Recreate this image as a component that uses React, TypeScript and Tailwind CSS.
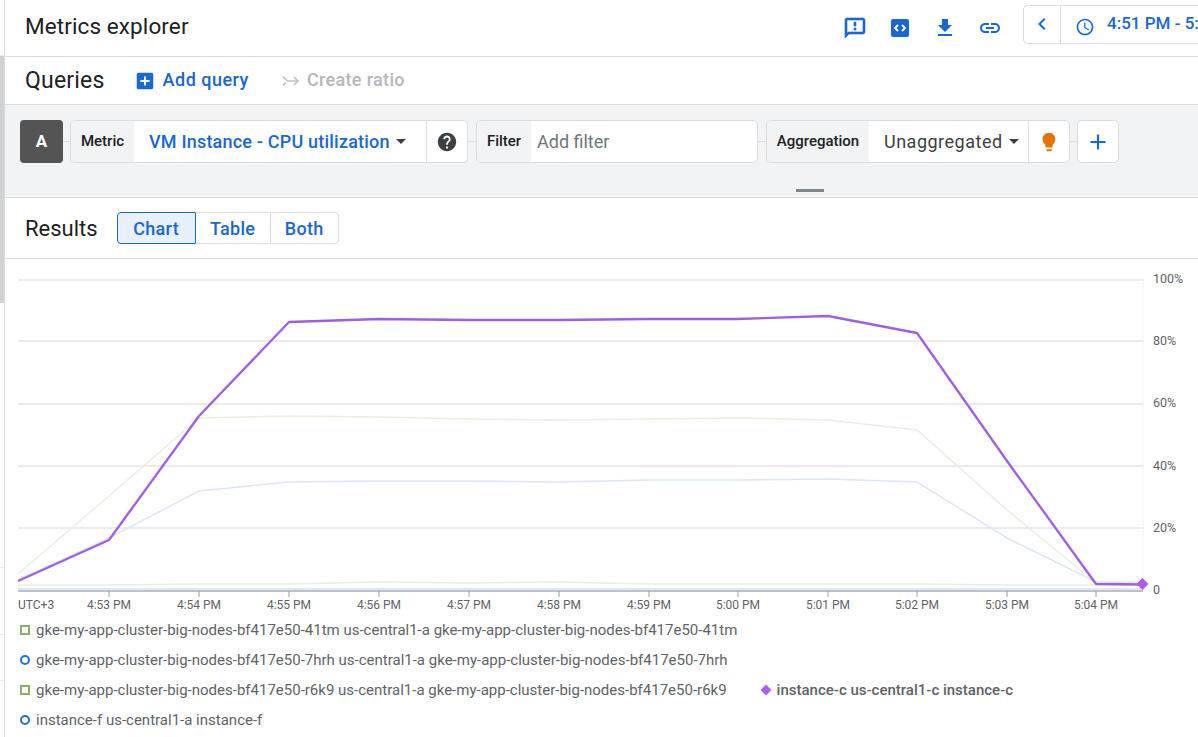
import React from "react";

const BLUE = "#1967d2";

function MI({ d, size = 24, color = BLUE }: { d: string; size?: number; color?: string }) {
  return (
    <svg width={size} height={size} viewBox="0 0 24 24" fill={color} className="shrink-0">
      <path d={d} />
    </svg>
  );
}

const icons = {
  download: "M19 9h-4V3H9v6H5l7 7 7-7zM5 18v2h14v-2H5z",
  link: "M3.9 12c0-1.71 1.39-3.1 3.1-3.1h4V7H7c-2.76 0-5 2.24-5 5s2.24 5 5 5h4v-1.9H7c-1.71 0-3.1-1.39-3.1-3.1zM8 13h8v-2H8v2zm9-6h-4v1.9h4c1.71 0 3.1 1.39 3.1 3.1s-1.39 3.1-3.1 3.1h-4V17h4c2.76 0 5-2.24 5-5s-2.24-5-5-5z",
  chevron: "M15.41 7.41L14 6l-6 6 6 6 1.41-1.41L10.83 12z",
  clock: "M11.99 2C6.47 2 2 6.48 2 12s4.47 10 9.99 10C17.52 22 22 17.52 22 12S17.52 2 11.99 2zM12 20c-4.42 0-8-3.58-8-8s3.58-8 8-8 8 3.58 8 8-3.58 8-8 8zm.5-13H11v6l5.25 3.15.75-1.23-4.5-2.67z",
  addBox: "M19 3H5c-1.11 0-2 .9-2 2v14c0 1.1.89 2 2 2h14c1.1 0 2-.9 2-2V5c0-1.1-.9-2-2-2zm-2 10h-4v4h-2v-4H7v-2h4V7h2v4h4v2z",
  help: "M12 2C6.48 2 2 6.48 2 12s4.48 10 10 10 10-4.48 10-10S17.52 2 12 2zm1 17h-2v-2h2v2zm2.07-7.75l-.9.92C13.45 12.9 13 13.5 13 15h-2v-.5c0-1.1.45-2.1 1.17-2.83l1.24-1.26c.37-.36.59-.86.59-1.41 0-1.1-.9-2-2-2s-2 .9-2 2H8c0-2.21 1.79-4 4-4s4 1.79 4 4c0 .88-.36 1.68-.93 2.25z",
  bulb: "M9 21c0 .55.45 1 1 1h4c.55 0 1-.45 1-1v-1H9v1zm3-19C8.14 2 5 5.14 5 9c0 2.38 1.19 4.47 3 5.74V17c0 .55.45 1 1 1h6c.55 0 1-.45 1-1v-2.26c1.81-1.27 3-3.36 3-5.74 0-3.86-3.14-7-7-7z",
  add: "M19 13h-6v6h-2v-6H5v-2h6V5h2v6h6v2z",
};

function FeedbackIcon() {
  return (
    <svg width={24} height={24} viewBox="0 0 24 24" className="shrink-0">
      <path d="M20 2H4c-1.1 0-2 .9-2 2v18l4-4h14c1.1 0 2-.9 2-2V4c0-1.1-.9-2-2-2zm0 14H5.17L4 17.17V4h16v12zM11 12h2v2h-2zm0-6h2v4h-2z" fill={BLUE} stroke={BLUE} strokeWidth="0.6" />
    </svg>
  );
}

function CodeIcon() {
  return (
    <svg width={24} height={24} viewBox="0 0 24 24" className="shrink-0">
      <rect x="3" y="3" width="18" height="18" rx="2" fill={BLUE} />
      <path d="M10 9l-3 3 3 3M14 9l3 3-3 3" fill="none" stroke="#fff" strokeWidth="1.8" />
    </svg>
  );
}

function RatioIcon() {
  return (
    <svg width={18} height={18} viewBox="0 0 18 18" fill="none" stroke="#bdc1c6" strokeWidth="1.6" className="shrink-0">
      <path d="M1 4.5l4.5 4.5H16M12 5l4 4-4 4M1 13.5l3-3" />
    </svg>
  );
}

function Caret() {
  return <span className="ml-[6px] h-0 w-0 border-x-[5px] border-t-[5px] border-x-transparent border-t-[#3c4043]" />;
}

const xTicks: [number, string][] = [
  [109, "4:53 PM"],
  [199, "4:54 PM"],
  [289, "4:55 PM"],
  [379, "4:56 PM"],
  [469, "4:57 PM"],
  [559, "4:58 PM"],
  [649, "4:59 PM"],
  [738, "5:00 PM"],
  [828, "5:01 PM"],
  [917, "5:02 PM"],
  [1007, "5:03 PM"],
  [1096, "5:04 PM"],
];

const yTicks: [number, string, number][] = [
  [280, "100%", 283],
  [341, "80%", 345],
  [404, "60%", 407],
  [466, "40%", 470],
  [528, "20%", 532],
];

const X = [18, 109, 199, 289, 379, 469, 559, 649, 738, 828, 917, 1007, 1096, 1143];
const toPts = (ys: number[]) => ys.map((y, i) => `${X[i]},${y}`).join(" ");

const purple = toPts([581, 540, 416, 322, 319, 320, 320, 319, 319, 316, 333, 461, 584, 584.5]);
const beige = toPts([574, 496, 418, 416, 417, 419, 420, 419, 418, 420, 430, 510, 583, 584]);
const lightBlue = toPts([580, 538, 491, 482, 481, 481, 482, 480, 480, 479, 482, 538, 582, 582]);
const lowGreen = toPts([585, 585, 584, 584, 582, 583, 582, 584, 584, 584, 584, 585, 585, 585]);
const lowBlue = toPts([589, 589, 589, 589, 589, 589, 589, 589, 589, 589, 589, 589, 589, 589]);

function Chart() {
  return (
    <svg width={1193} height={356} viewBox="5 259 1193 356" className="block shrink-0" style={{ fontFamily: "Roboto, sans-serif" }}>
      {yTicks.map(([y]) => (
        <line key={y} x1={18} x2={1144} y1={y} y2={y} stroke="#e3e4e8" strokeWidth={1.3} />
      ))}
      <line x1={1143} x2={1143} y1={280} y2={590} stroke="#f3f4f5" />
      <polyline points={beige} fill="none" stroke="#e9eee0" strokeWidth={1.5} />
      <polyline points={lightBlue} fill="none" stroke="#dce6f5" strokeWidth={1.5} />
      <polyline points={lowGreen} fill="none" stroke="#e9eee0" strokeWidth={1.5} />
      <polyline points={lowBlue} fill="none" stroke="#d5e1f4" strokeWidth={1.5} />
      <line x1={18} x2={1143} y1={591} y2={591} stroke="#80868b" strokeWidth={1} />
      <polyline points={purple} fill="none" stroke="#a05fe0" strokeWidth={2.3} strokeLinejoin="round" />
      <path d="M1142.5 578l6 6-6 6-6-6z" fill="#af5cf0" />
      {xTicks.map(([x, t]) => (
        <g key={t}>
          <line x1={x} x2={x} y1={591} y2={597} stroke="#9aa0a6" />
          <text x={x} y={609} textAnchor="middle" fontSize={12} fill="#5f6368">
            {t}
          </text>
        </g>
      ))}
      <text x={18} y={609} fontSize={12} fill="#5f6368">
        UTC+3
      </text>
      {yTicks.map(([, t, ty]) => (
        <text key={t} x={1153} y={ty} fontSize={12.5} fill="#5f6368">
          {t}
        </text>
      ))}
      <text x={1153} y={594} fontSize={12.5} fill="#5f6368">
        0
      </text>
    </svg>
  );
}

function Square() {
  return <span className="h-[10px] w-[10px] shrink-0 border-2 border-[#8cae66]" />;
}
function Circle() {
  return <span className="h-[10px] w-[10px] shrink-0 rounded-full border-2 border-[#1f6fd8]" />;
}
function Diamond() {
  return (
    <svg width={12} height={12} viewBox="0 0 12 12" className="shrink-0">
      <path d="M6 .5L11.5 6 6 11.5.5 6z" fill="#af5cf0" />
    </svg>
  );
}

function LegendItem({ mark, text, bold }: { mark: React.ReactNode; text: string; bold?: boolean }) {
  return (
    <div className="flex items-center gap-[6px]">
      <span className="flex w-[10px] items-center justify-center">{mark}</span>
      <span className={bold ? "font-medium" : ""}>{text}</span>
    </div>
  );
}

export default function App() {
  return (
    <div
      className="flex h-[737px] w-[1198px] overflow-hidden bg-white text-[#202124]"
      style={{ fontFamily: "Roboto, 'Noto Sans', sans-serif" }}
    >
      <div className="flex w-[5px] shrink-0 flex-col border-r border-[#dadce0]">
        <div className="h-[56px] border-b border-[#e8eaed]" />
        <div className="h-[247px] bg-[#cfd1d3]" />
        <div className="h-[265px] border-b border-[#e8eaed]" />
        <div className="h-[67px] border-b border-[#e8eaed]" />
        <div className="h-[46px] border-b border-[#e8eaed]" />
      </div>

      <div className="flex min-w-0 flex-1 flex-col">
        {/* Header */}
        <div className="flex h-[57px] shrink-0 items-center border-b border-[#dadce0] pl-[20px]">
          <h1 className="pb-[3px] text-[22.5px] font-normal leading-none tracking-[0.1px]">Metrics explorer</h1>
          <div className="ml-auto flex items-center gap-[21px]">
            <FeedbackIcon />
            <CodeIcon />
            <MI d={icons.download} />
            <MI d={icons.link} />
          </div>
          <div className="ml-[21px] flex h-[39px] w-[175px] shrink-0 translate-y-[-4px] items-center rounded-l-[5px] border border-r-0 border-[#dadce0]">
            <div className="flex h-full w-[37px] shrink-0 items-center justify-center border-r border-[#dadce0]">
              <MI d={icons.chevron} size={24} />
            </div>
            <div className="ml-[14px] translate-y-[3px]">
              <MI d={icons.clock} size={20} />
            </div>
            <span className="ml-[12px] whitespace-nowrap text-[17px] font-medium text-[#1967d2]">4:51 PM - 5:15 PM</span>
          </div>
        </div>

        {/* Queries */}
        <div className="flex h-[48px] shrink-0 items-center border-b border-[#dadce0] pl-[20px]">
          <span className="text-[23px] leading-none tracking-[0.2px]">Queries</span>
          <div className="ml-[29px] flex items-center">
            <MI d={icons.addBox} size={22} />
            <span className="ml-[7px] pb-[2px] text-[18px] font-medium tracking-[0.5px] text-[#1967d2]">Add query</span>
          </div>
          <div className="ml-[33px] flex items-center">
            <RatioIcon />
            <span className="ml-[7px] pb-[2px] text-[18px] font-medium tracking-[0.33px] text-[#b4b7bb]">Create ratio</span>
          </div>
        </div>

        {/* Query builder */}
        <div className="relative flex h-[93px] shrink-0 items-start border-b border-[#dadce0] bg-[#f1f3f4] pl-[15px] pt-[15px]">
          <div className="flex h-[43px] items-center">
            <div className="flex h-[43px] w-[43px] items-center justify-center rounded-[4px] bg-[#545454] text-[17px] font-bold text-white">
              A
            </div>
            <span className="h-px w-[7px] shrink-0 bg-[#dadce0]" />
            <div className="flex h-[43px] w-[398px] items-center overflow-hidden rounded-[5px] border border-[#dadce0] bg-white">
              <div className="flex h-full w-[63px] items-center justify-center bg-[#f1f3f4] text-[15px] font-medium">Metric</div>
              <div className="flex flex-1 items-center pl-[15px]">
                <span className="pb-px text-[18px] font-medium tracking-[0.2px] text-[#1967d2]">VM Instance - CPU utilization</span>
                <Caret />
              </div>
              <div className="flex h-full w-[41px] items-center justify-center border-l border-[#dadce0]">
                <MI d={icons.help} size={22} color="#3c4043" />
              </div>
            </div>
            <span className="h-px w-[8px] shrink-0 bg-[#dadce0]" />
            <div className="flex h-[43px] w-[282px] items-center overflow-hidden rounded-[5px] border border-[#dadce0] bg-white">
              <div className="flex h-full w-[54px] items-center justify-center bg-[#f1f3f4] text-[15px] font-medium">Filter</div>
              <span className="ml-[6px] text-[18px] text-[#70757a]">Add filter</span>
            </div>
            <span className="h-px w-[8px] shrink-0 bg-[#dadce0]" />
            <div className="flex h-[43px] w-[304px] items-center overflow-hidden rounded-[5px] border border-[#dadce0] bg-white">
              <div className="flex h-full w-[102px] items-center justify-center bg-[#f1f3f4] text-[15px] font-medium">Aggregation</div>
              <div className="flex flex-1 items-center pl-[15px]">
                <span className="text-[18px] tracking-[0.5px] text-[#3c4043]">Unaggregated</span>
                <Caret />
              </div>
              <div className="flex h-full w-[41px] items-center justify-center border-l border-[#dadce0]">
                <MI d={icons.bulb} size={22} color="#e37400" />
              </div>
            </div>
            <span className="h-px w-[7px] shrink-0 bg-[#dadce0]" />
            <div className="flex h-[43px] w-[42px] items-center justify-center rounded-[5px] border border-[#dadce0] bg-white">
              <MI d={icons.add} size={26} />
            </div>
          </div>
          <div className="absolute bottom-[5px] left-[791px] h-[3px] w-[28px] bg-[#80868b]" />
        </div>

        {/* Results */}
        <div className="flex h-[61px] shrink-0 items-center border-b border-[#dadce0] pl-[20px]">
          <span className="pt-[2px] text-[22px] leading-none">Results</span>
          <div className="ml-[19px] flex h-[32px] items-stretch text-[18px] font-medium tracking-[0.3px] text-[#1967d2]">
            <div className="flex w-[79px] items-center justify-center rounded-l-[4px] border border-[#1967d2] bg-[#e8f0fe]">Chart</div>
            <div className="flex w-[74px] items-center justify-center border-y border-[#dadce0]">Table</div>
            <div className="flex w-[69px] items-center justify-center rounded-r-[4px] border border-[#dadce0]">Both</div>
          </div>
        </div>

        {/* Chart */}
        <Chart />

        {/* Legend */}
        <div className="flex flex-col pl-[15px] text-[15px] leading-[30px] text-[#5f6368]">
          <LegendItem mark={<Square />} text="gke-my-app-cluster-big-nodes-bf417e50-41tm us-central1-a gke-my-app-cluster-big-nodes-bf417e50-41tm" />
          <LegendItem mark={<Circle />} text="gke-my-app-cluster-big-nodes-bf417e50-7hrh us-central1-a gke-my-app-cluster-big-nodes-bf417e50-7hrh" />
          <div className="flex gap-[34px]">
            <LegendItem mark={<Square />} text="gke-my-app-cluster-big-nodes-bf417e50-r6k9 us-central1-a gke-my-app-cluster-big-nodes-bf417e50-r6k9" />
            <LegendItem mark={<Diamond />} text="instance-c us-central1-c instance-c" bold />
          </div>
          <LegendItem mark={<Circle />} text="instance-f us-central1-a instance-f" />
        </div>
      </div>
    </div>
  );
}
